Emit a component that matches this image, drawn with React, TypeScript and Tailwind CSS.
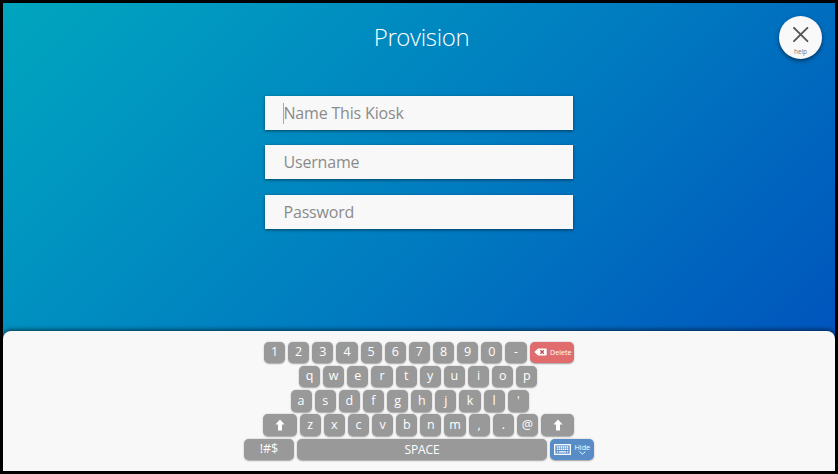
import React from "react";

const KEY =
  "flex h-[21.4px] shrink-0 items-center justify-center rounded-[5px] bg-[#999999] text-[12.5px] leading-none text-white shadow-[0_0.5px_1.5px_rgba(0,0,0,0.35)]";

function Key({ children, width = "w-[21.1px]" }: { children: React.ReactNode; width?: string }) {
  return <button className={`${KEY} ${width}`}>{children}</button>;
}

function Letters({ chars }: { chars: string }) {
  return (
    <>
      {chars.split("").map((c) => (
        <Key key={c}>{c}</Key>
      ))}
    </>
  );
}

function Row({ children, indent }: { children: React.ReactNode; indent: string }) {
  return <div className={`flex gap-[3.05px] ${indent}`}>{children}</div>;
}

function ShiftIcon() {
  return (
    <svg width="10" height="12" viewBox="0 0 10 12" fill="white">
      <path d="M5 .4 9.6 5.6H7V11.4H3V5.6H.4Z" />
    </svg>
  );
}

function DeleteIcon() {
  return (
    <svg width="13" height="8" viewBox="0 0 13 8">
      <path d="M4 .5H11.8Q12.7.5 12.7 1.4V6.6Q12.7 7.5 11.8 7.5H4L.4 4Z" fill="white" />
      <path d="m6.4 2.3 3.4 3.4M9.8 2.3 6.4 5.7" stroke="#b8484c" strokeWidth="1.3" />
    </svg>
  );
}

function KeyboardIcon() {
  return (
    <svg width="17" height="11" viewBox="0 0 17 11" fill="none" stroke="white">
      <rect x=".7" y=".7" width="15.6" height="9.6" strokeWidth="1.3" />
      <path d="M2.7 3h11.6M2.7 5.3h11.6" strokeWidth="1.5" strokeDasharray="1.5 .52" />
      <path d="M2.7 7.9h1.5M5 7.9h7M12.8 7.9h1.5" strokeWidth="1.4" />
    </svg>
  );
}

function Field({ label, active = false }: { label: string; active?: boolean }) {
  return (
    <div className="flex h-[34px] w-[308px] items-center bg-[#f8f8f8] pl-[18px] text-[16px] text-[#8b8b8b] shadow-[0_1px_3px_rgba(0,0,0,0.5)]">
      <span className={`mr-[-0.5px] h-[21px] w-px ${active ? "bg-[#aaaaaa]" : ""}`} />
      <span className="tracking-[-0.18px]">{label}</span>
    </div>
  );
}

export default function App() {
  return (
    <div className="h-[474px] w-[838px] overflow-hidden border-[3px] border-black bg-black font-['Open_Sans','Noto_Sans',sans-serif]">
      <div className="relative flex h-full flex-col bg-[linear-gradient(135deg,#00a5bd_0%,#009cc0_12%,#007bc0_50%,#0057bd_87%,#0050bb_100%)]">
        <h1 className="mt-[17px] pl-[5px] text-center text-[24px] leading-[34px] font-light tracking-[-0.35px] text-white">Provision</h1>
        <button className="absolute top-[13px] right-[13px] flex h-[43px] w-[43px] flex-col items-center rounded-full bg-[#f9f9f9] pt-[10.5px] shadow-[0_2px_4px_rgba(0,0,0,0.5)]">
          <svg width="16" height="16" viewBox="0 0 16 16" stroke="#555" strokeWidth="1.9" strokeLinecap="round">
            <path d="m1 .8 13.4 13.4M14.4.8 1 14.2" />
          </svg>
          <span className="mt-[5.5px] text-[6.3px] leading-[8px] text-[#777777]">help</span>
        </button>
        <div className="mt-[42px] ml-[262px] flex flex-col gap-[15.4px]">
          <Field label="Name This Kiosk" active />
          <Field label="Username" />
          <Field label="Password" />
        </div>
        <div className="mt-auto flex h-[140.5px] flex-col gap-[2.95px] rounded-t-[8px] bg-[#f8f8f8] pt-[11px] shadow-[0_-1px_5px_rgba(0,0,0,0.65)]">
          <Row indent="pl-[261px]">
            <Letters chars="1234567890-" />
            <button className="flex h-[21.4px] w-[44.5px] items-center justify-center gap-[3px] rounded-[5px] bg-[#e06c6e] text-[7.2px] text-white shadow-[0_0.5px_1.5px_rgba(0,0,0,0.35)]">
              <DeleteIcon />
              <span className="-mr-[2px]">Delete</span>
            </button>
          </Row>
          <Row indent="pl-[296px]">
            <Letters chars="qwertyuiop" />
          </Row>
          <Row indent="pl-[287.5px]">
            <Letters chars="asdfghjkl'" />
          </Row>
          <Row indent="pl-[260.3px]">
            <Key width="w-[33.3px]"><ShiftIcon /></Key>
            <Letters chars="zxcvbnm,.@" />
            <Key width="w-[33.3px]"><ShiftIcon /></Key>
          </Row>
          <Row indent="pl-[241px]">
            <Key width="w-[50px]">!#$</Key>
            <Key width="w-[250px]"><span className="text-[12px] tracking-[-0.15px]">SPACE</span></Key>
            <button className="-ml-[0.5px] flex h-[21.4px] w-[44.5px] items-center justify-center gap-[4px] rounded-[5px] bg-[#588cc6] text-white shadow-[0_0.5px_1.5px_rgba(0,0,0,0.35)]">
              <KeyboardIcon />
              <span className="flex flex-col items-center text-[7.2px] leading-[7px]">
                Hide
                <svg width="7" height="4" viewBox="0 0 7 4" fill="none" stroke="white" strokeWidth=".9">
                  <path d="m.6.7 2.9 2.4L6.4.7" />
                </svg>
              </span>
            </button>
          </Row>
        </div>
      </div>
    </div>
  );
}
